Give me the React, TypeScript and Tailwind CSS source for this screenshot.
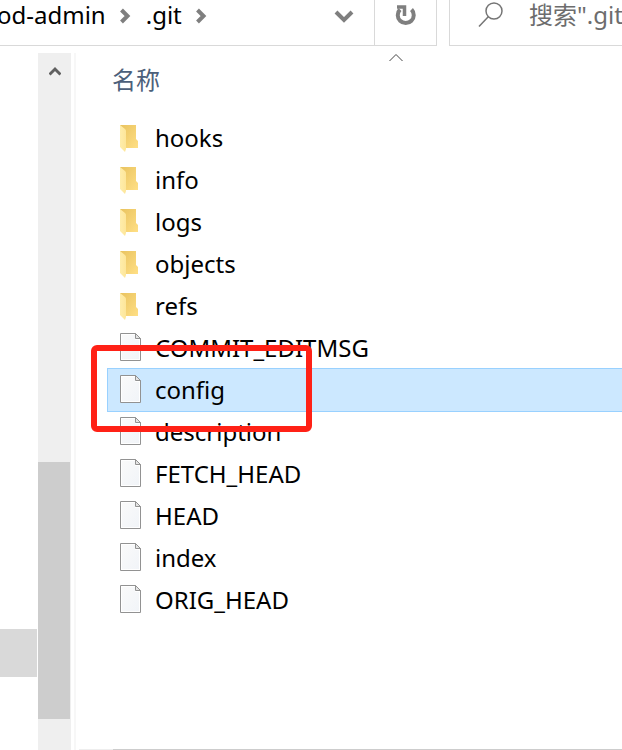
import React from 'react';

type Entry = { name: string; kind: 'folder' | 'file' };

const entries: Entry[] = [
  { name: 'hooks', kind: 'folder' },
  { name: 'info', kind: 'folder' },
  { name: 'logs', kind: 'folder' },
  { name: 'objects', kind: 'folder' },
  { name: 'refs', kind: 'folder' },
  { name: 'COMMIT_EDITMSG', kind: 'file' },
  { name: 'config', kind: 'file' },
  { name: 'description', kind: 'file' },
  { name: 'FETCH_HEAD', kind: 'file' },
  { name: 'HEAD', kind: 'file' },
  { name: 'index', kind: 'file' },
  { name: 'ORIG_HEAD', kind: 'file' },
];

const FolderIcon = () => (
  <svg className="shrink-0" width="22" height="30" viewBox="0 0 22 30" aria-hidden="true">
    <defs>
      <linearGradient id="folderBack" x1="0" y1="0" x2="1" y2="1">
        <stop offset="0" stopColor="#e9c35f" />
        <stop offset="1" stopColor="#ffdf85" />
      </linearGradient>
      <linearGradient id="folderFront" x1="0" y1="0" x2="1" y2="0">
        <stop offset="0" stopColor="#ffedab" />
        <stop offset="1" stopColor="#fde69a" />
      </linearGradient>
    </defs>
    <path d="M0 2h16v14l2 2v7H4z" fill="url(#folderBack)" />
    <path d="M0 2l5 4q1 1 1 2v18l-1 3-5-5z" fill="url(#folderFront)" />
  </svg>
);

const FileIcon = () => (
  <svg className="shrink-0" width="22" height="30" viewBox="0 0 22 30" aria-hidden="true">
    <defs>
      <linearGradient id="filePaper" x1="0" y1="0" x2="1" y2="1">
        <stop offset="0" stopColor="#fafafa" />
        <stop offset="1" stopColor="#f1f4f8" />
      </linearGradient>
    </defs>
    <path d="M.5.5h15l5 5v22H.5z" fill="#fff" stroke="#929292" />
    <path d="M2 2h13v5h4v19H2z" fill="url(#filePaper)" />
    <path d="M15.5.5v5h5z" fill="#e4e4e4" stroke="#929292" />
  </svg>
);

const BreadcrumbArrow = () => (
  <svg className="shrink-0" width="11" height="16" viewBox="0 0 11 16" fill="none" stroke="#7f7f7f" strokeWidth="4" aria-hidden="true">
    <path d="M1.500 2l6 6-6 6" />
  </svg>
);

export default function App() {
  const [selected, setSelected] = React.useState('config');

  return (
    <div className="flex h-screen flex-col overflow-hidden bg-white font-['Noto_Sans','Noto_Sans_CJK_SC',sans-serif] text-2xl text-black">
      <header className="flex h-[46px] shrink-0">
        <nav className="flex min-w-0 flex-1 items-start border-b border-[#d9d9d9]">
          <a href="#admin" className="-ml-[3px] h-8 leading-[30px]">od-admin</a>
          <span className="flex h-8 w-10 items-center justify-center"><BreadcrumbArrow /></span>
          <a href="#git" className="h-8 leading-[30px]">.git</a>
          <span className="flex h-8 w-10 items-center justify-center"><BreadcrumbArrow /></span>
          <button aria-label="Recent locations" className="mr-5 ml-auto flex h-8 items-center">
            <svg width="20" height="16" viewBox="0 0 20 16" fill="none" stroke="#7f7f7f" strokeWidth="4">
              <path d="M2 4l8 8 8-8" />
            </svg>
          </button>
        </nav>
        <button aria-label="Refresh" className="flex w-[63px] shrink-0 justify-center border-x border-b border-[#d9d9d9] pt-1">
          <svg width="22" height="24" viewBox="0 0 22 24" fill="none" stroke="#7f7f7f" strokeWidth="4">
            <path d="M16.500 5.500a8 8 0 1 1-11.500 0" />
            <path d="M2 3h7.500v9" strokeWidth="3.500" />
          </svg>
        </button>
        <label className="ml-3 flex w-[173px] shrink-0 overflow-hidden border-b border-l border-[#d9d9d9]">
          <svg className="ml-7 mt-0.5 shrink-0" width="26" height="26" viewBox="0 0 26 26" fill="none" stroke="#757575" strokeWidth="1.500" aria-hidden="true">
            <circle cx="16" cy="9" r="8" />
            <path d="M10.500 14.500L1 24.500" />
          </svg>
          <input
            aria-label="Search"
            placeholder={'搜索".git"'}
            className="ml-[25px] h-[30px] w-40 shrink-0 leading-[30px] outline-none placeholder:text-[#6d6d6d]"
          />
        </label>
      </header>

      <div className="flex min-h-0 flex-1">
        <aside className="flex w-[37px] shrink-0 flex-col justify-end pb-[73px]">
          <div className="h-12 bg-[#d9d9d9]" />
        </aside>
        <div className="mt-[7px] ml-px flex w-[33px] shrink-0 flex-col bg-[#efefef] pb-[31px]">
          <button aria-label="Scroll up" className="flex h-9 justify-center pt-3">
            <svg width="12" height="12" viewBox="0 0 12 12" fill="none" stroke="#606060" strokeWidth="3">
              <path d="M.5 9.500L6 4l5.500 5.500" />
            </svg>
          </button>
          <div className="mt-auto mr-px h-[257px] bg-[#cdcdcd]" />
        </div>
        <div className="mt-[7px] ml-[3px] w-0.5 shrink-0 bg-[#f7f7f7]" />

        <main className="ml-[3px] flex min-w-0 flex-1 flex-col overflow-hidden">
          <div className="ml-7 min-w-0 flex-1">
            <button className="flex h-[71px] w-[577px] flex-col pt-[7px] text-left text-[#4c607a]">
              <svg className="self-center" width="14" height="9" viewBox="0 0 14 9" fill="none" stroke="#444" aria-hidden="true">
                <path d="M.5 8L7 1.500 13.500 8" />
              </svg>
              <span className="pl-[5px] leading-9">名称</span>
            </button>
            <ul>
              {entries.map((entry) => {
                const active = entry.name === selected;
                return (
                  <li key={entry.name} className="relative">
                    <button
                      onClick={() => setSelected(entry.name)}
                      className={
                        active
                          ? '-my-px flex h-11 w-full items-center border-y border-l border-[#99d1ff] bg-[#cce8ff] pl-3 text-left'
                          : 'flex h-[42px] w-full items-center pl-[13px] text-left'
                      }
                    >
                      {entry.kind === 'folder' ? <FolderIcon /> : <FileIcon />}
                      <span className="ml-[13px] whitespace-nowrap">{entry.name}</span>
                    </button>
                    {entry.name === 'config' && (
                      <div className="pointer-events-none absolute -top-[23px] -left-4 z-10 h-[87px] w-[221px] rounded-md border-[6px] border-[#ff2116]" />
                    )}
                  </li>
                );
              })}
            </ul>
          </div>
          <div className="flex h-px shrink-0 bg-[#eeeeee] pl-[34px]">
            <div className="flex-1 bg-[#cdcdcd]" />
          </div>
        </main>
      </div>
    </div>
  );
}
